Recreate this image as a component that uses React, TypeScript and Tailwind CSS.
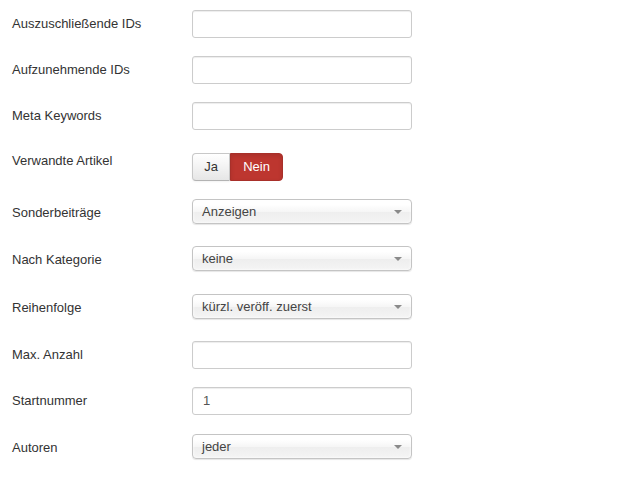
import React from "react";

const font = { fontFamily: '"Liberation Sans", Arial, sans-serif' };

function Label({ text, pt = "pt-[5px]" }: { text: string; pt?: string }) {
  return (
    <div className={`w-[192px] shrink-0 pl-[12px] ${pt} text-[13px] leading-[18px] text-[#333333]`}>
      {text}
    </div>
  );
}

function TextInput({ value = "" }: { value?: string }) {
  return (
    <div className="w-[220px] h-[28px] border border-[#cccccc] rounded-[3px] bg-white shadow-[inset_0_1px_1px_rgba(0,0,0,0.075)] flex items-center pl-[10px] text-[13px] text-[#555555]">
      {value}
    </div>
  );
}

function Select({ value }: { value: string }) {
  return (
    <div className="w-[220px] h-[25px] border border-[#c4c4c4] rounded-[4px] bg-[linear-gradient(#ffffff_20%,#f6f6f6_50%,#eeeeee_52%,#f4f4f4_100%)] shadow-[0_0_3px_#ffffff_inset,0_1px_1px_rgba(0,0,0,0.1)] flex items-center justify-between pl-[9px] pr-[5px] text-[13px] text-[#444444]">
      <span className="leading-[23px]">{value}</span>
      <svg width="14" height="8" viewBox="0 0 14 8" className="mr-[1px]">
        <path d="M3 2 L11 2 L7 6 Z" fill="#8a8a8a" />
      </svg>
    </div>
  );
}

export default function App() {
  return (
    <div className="w-[643px] h-[478px] bg-white pt-[10px]" style={font}>
      <div className="flex h-[28px] mb-[18px]">
        <Label text="Auszuschließende IDs" />
        <TextInput />
      </div>
      <div className="flex h-[28px] mb-[18px]">
        <Label text="Aufzunehmende IDs" />
        <TextInput />
      </div>
      <div className="flex h-[28px] mb-[18px]">
        <Label text="Meta Keywords" />
        <TextInput />
      </div>
      <div className="flex h-[33px] mb-[18px]">
        <Label text="Verwandte Artikel" pt="pt-[4px]" />
        <div className="mt-[5px] flex h-[28px] text-[13px]">
          <div className="w-[38px] h-[28px] flex items-center justify-center border border-[#c8c8c8] border-b-[#b3b3b3] rounded-l-[4px] bg-[linear-gradient(#ffffff,#e6e6e6)] text-[#333333] shadow-[inset_0_1px_0_rgba(255,255,255,0.2),0_1px_2px_rgba(0,0,0,0.05)]">
            Ja
          </div>
          <div className="w-[53px] h-[28px] flex items-center justify-center rounded-r-[4px] bg-[#bd362f] border border-[#a8302a] text-white shadow-[inset_0_2px_4px_rgba(0,0,0,0.1)]">
            Nein
          </div>
        </div>
      </div>
      <div className="flex h-[29px] mb-[18px]">
        <Label text="Sonderbeiträge" />
        <Select value="Anzeigen" />
      </div>
      <div className="flex h-[30px] mb-[18px]">
        <Label text="Nach Kategorie" />
        <Select value="keine" />
      </div>
      <div className="flex h-[29px] mb-[18px]">
        <Label text="Reihenfolge" />
        <Select value="kürzl. veröff. zuerst" />
      </div>
      <div className="flex h-[28px] mb-[18px]">
        <Label text="Max. Anzahl" />
        <TextInput />
      </div>
      <div className="flex h-[28px] mb-[19px]">
        <Label text="Startnummer" />
        <TextInput value="1" />
      </div>
      <div className="flex h-[29px]">
        <Label text="Autoren" />
        <Select value="jeder" />
      </div>
    </div>
  );
}
